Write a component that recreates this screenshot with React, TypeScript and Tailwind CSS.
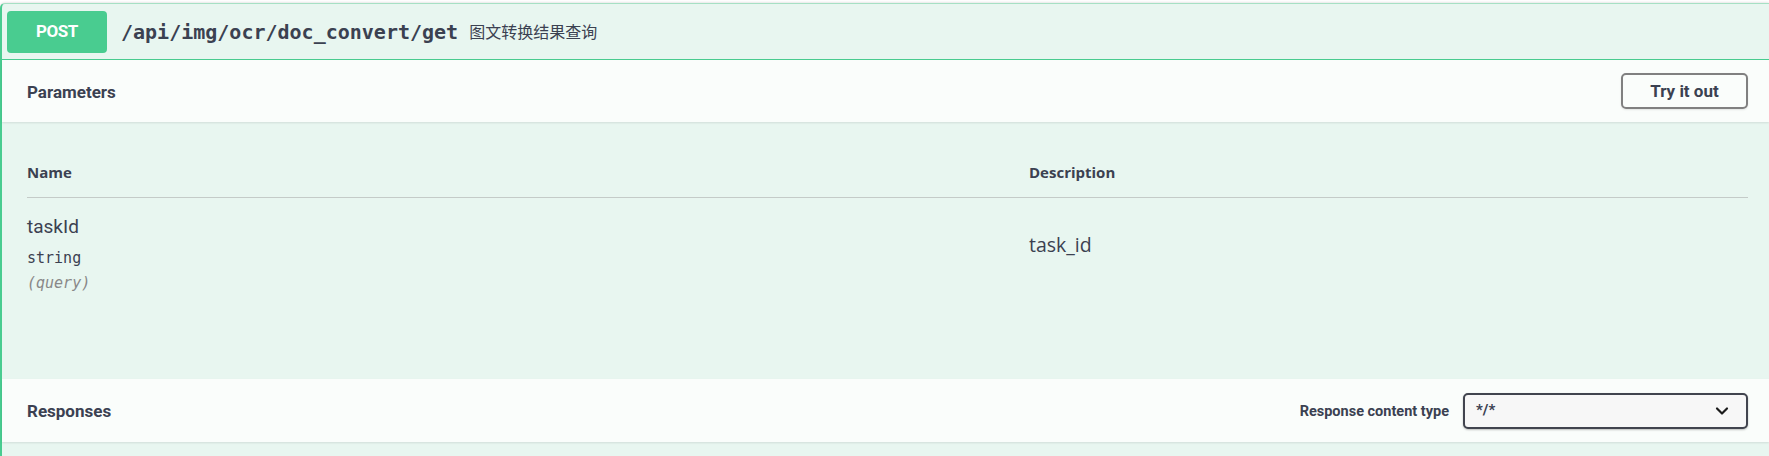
import React from 'react'

const sans = { fontFamily: 'Roboto, "Noto Sans", sans-serif' }
const open = { fontFamily: '"Open Sans", "Noto Sans", sans-serif' }
const mono = { fontFamily: '"DejaVu Sans Mono", "Liberation Mono", monospace' }
const cjk = { fontFamily: '"Open Sans", "Noto Sans CJK SC", sans-serif' }

// 参数行
const ParamRow = () => (
  <div className="grid grid-cols-[1002px_1fr]">
    <div className="pt-[17px]">
      <div className="text-[19px] leading-[24px] text-[#3b4151]" style={sans}>
        taskId
      </div>
      <div className="mt-[9px] text-[15px] leading-[20px] text-[#3b4151]" style={mono}>
        string
      </div>
      <div className="mt-[5px] text-[15px] italic leading-[20px] text-[#888888]" style={mono}>
        (query)
      </div>
    </div>
    <div className="pt-[33px] text-[19.5px] leading-[27px] text-[#3b4151]" style={open}>
      task_id
    </div>
  </div>
)

const SectionHeader = ({ children }: { children: React.ReactNode }) => (
  <div className="relative z-10 flex items-center justify-between bg-[#fafdfb] pl-[25px] pr-[21px] shadow-[0_1px_2px_rgba(0,0,0,0.1)]">
    {children}
  </div>
)

export default function App() {
  return (
    <div className="h-[456px] w-full overflow-hidden bg-white pt-[3px]" style={sans}>
      <div className="h-[460px] rounded-tl-[5px] border-t border-l-2 border-t-[#a6e0c4] border-l-[#49cc90] bg-[#e8f6f0] shadow-[0_0_3px_rgba(0,0,0,0.19)]">
        {/* 接口摘要 */}
        <div className="flex h-[56px] items-center border-b border-[#49cc90] pl-[5px]">
          <span className="flex h-[42px] w-[100px] items-center justify-center rounded-[4px] bg-[#49cc90] text-[17px] font-bold tracking-tight text-white">
            POST
          </span>
          <span className="pl-[14px] text-[20px] font-semibold text-[#3b4151]" style={mono}>
            /api/img/ocr/doc_convert/get
          </span>
          <span className="pl-[11px] text-[16px] text-[#3b4151]" style={cjk}>
            图文转换结果查询
          </span>
        </div>

        {/* Parameters */}
        <div className="h-[62px]">
          <SectionHeader>
            <div className="flex h-[62px] items-center pt-[3px]">
              <h4 className="text-[17px] font-bold text-[#3b4151]">Parameters</h4>
            </div>
            <button className="h-[36px] w-[127px] rounded-[5px] border-2 border-[#808080] pt-[1px] text-[17px] font-bold text-[#3b4151] shadow-[0_1px_2px_rgba(0,0,0,0.1)]">
              Try it out
            </button>
          </SectionHeader>
        </div>

        <div className="h-[257px] pl-[25px] pr-[21px] pt-[25px]">
          <div className="grid h-[51px] grid-cols-[1002px_1fr] items-center border-b border-[#c4cbc8] text-[15px] font-bold text-[#3b4151]" style={open}>
            <div>Name</div>
            <div>Description</div>
          </div>
          <ParamRow />
        </div>

        {/* Responses */}
        <div className="h-[63px]">
          <SectionHeader>
            <div className="flex h-[63px] items-center pt-[3px]">
              <h4 className="text-[17px] font-bold text-[#3b4151]">Responses</h4>
            </div>
            <div className="flex items-center gap-[14px]">
              <span className="pt-[2px] text-[14.5px] font-bold text-[#3b4151]">Response content type</span>
              <div className="relative flex h-[36px] w-[285px] items-center rounded-[5px] border-2 border-[#41444e] bg-[#f7f7f7] pl-[11px] shadow-[0_1px_2px_rgba(0,0,0,0.25)]">
                <span className="text-[15px] font-bold text-[#3b4151]">*/*</span>
                <svg
                  className="absolute right-[14px] top-1/2 -translate-y-1/2"
                  width="20"
                  height="20"
                  viewBox="0 0 24 24"
                  fill="none"
                  stroke="#1b1b1b"
                  strokeWidth="2.6"
                  strokeLinecap="round"
                  strokeLinejoin="round"
                >
                  <path d="m6 9 6 6 6-6" />
                </svg>
              </div>
            </div>
          </SectionHeader>
        </div>
      </div>
    </div>
  )
}
